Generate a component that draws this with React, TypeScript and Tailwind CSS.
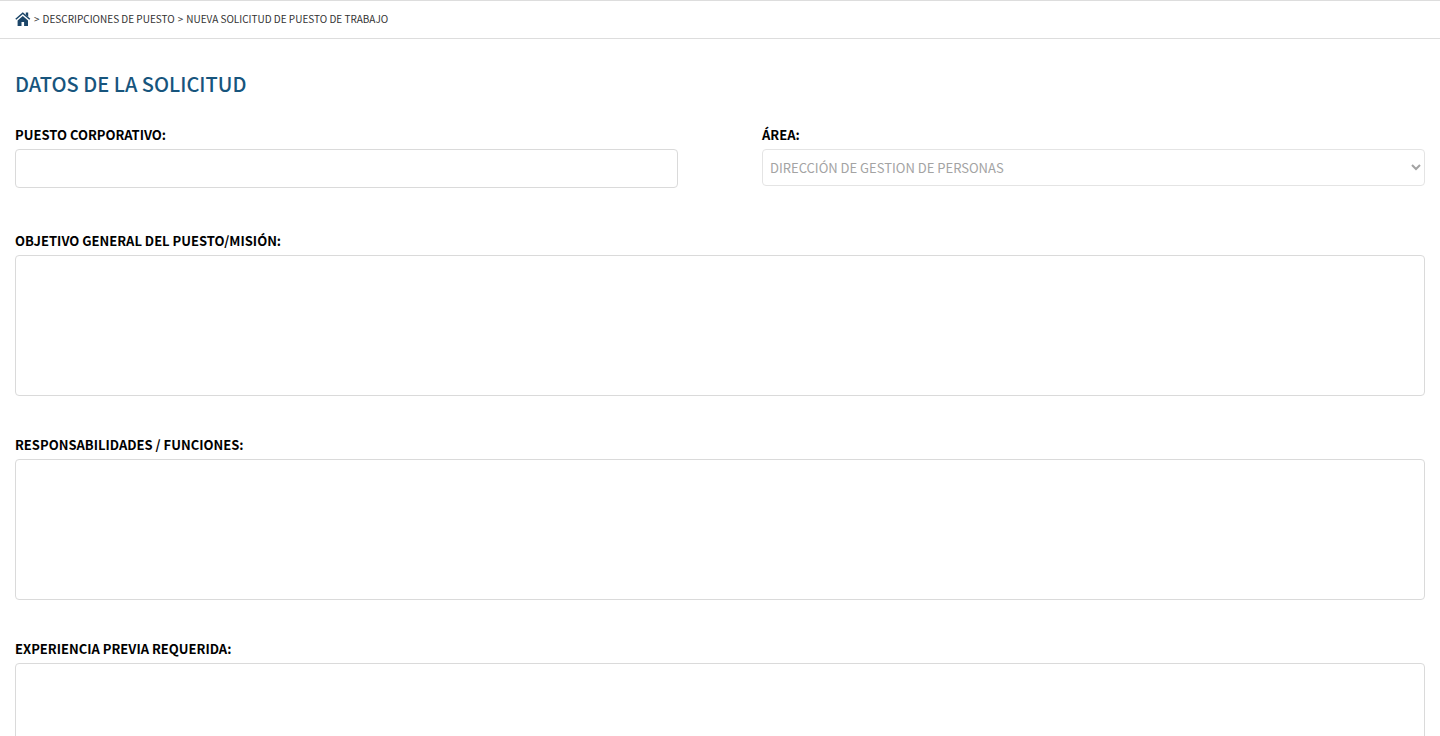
import React, { useState } from 'react';

interface TextAreaFieldProps {
  id: string;
  label: string;
  value: string;
  onChange: (value: string) => void;
}

const labelClass = 'block mb-1 text-[13px] leading-5 font-bold text-black uppercase';

const TextAreaField: React.FC<TextAreaFieldProps> = ({ id, label, value, onChange }) => (
  <div>
    <label htmlFor={id} className={labelClass}>{label}</label>
    <textarea
      id={id}
      value={value}
      onChange={(e) => onChange(e.target.value)}
      className="block w-full h-[141px] px-2 py-2 text-sm bg-white border border-[#dadada] rounded resize-none"
    />
  </div>
);

const HomeIcon: React.FC = () => (
  <svg className="w-4 h-4" viewBox="0 0 16 16" fill="none" aria-hidden="true">
    <path d="M0.8 8.2 L7.8 2.2 L14.8 8.2" stroke="#1b4568" strokeWidth="1.5" />
    <path d="M10.8 1.6 H13.2 V6 L10.8 3.9 Z" fill="#1b4568" />
    <path d="M7.8 5 L13 9.4 V15 H9.1 V11 H6.5 V15 H2.6 V9.4 Z" fill="#1b4568" />
  </svg>
);

const textAreas = [
  { id: 'objetivo', label: 'Objetivo general del puesto/misión:' },
  { id: 'responsabilidades', label: 'Responsabilidades / Funciones:' },
  { id: 'experiencia', label: 'Experiencia previa requerida:' },
];

const App: React.FC = () => {
  const [puesto, setPuesto] = useState('');
  const [values, setValues] = useState<Record<string, string>>({});

  const handleChange = (id: string, value: string) => {
    setValues((prev) => ({ ...prev, [id]: value }));
  };

  return (
    <div className="min-h-screen bg-white font-['Noto_Sans_CJK_SC','Noto_Sans',sans-serif]">
      <nav className="flex items-center gap-[3px] px-[15px] pt-[9px] pb-[11px] border-y border-[#dddddd] text-[10px] leading-[17px] text-[#333333] uppercase">
        <a href="#inicio" aria-label="Inicio"><HomeIcon /></a>
        <span>&gt;</span>
        <a href="#descripciones">Descripciones de puesto</a>
        <span>&gt;</span>
        <span>Nueva solicitud de puesto de trabajo</span>
      </nav>

      <main className="px-[15px] pt-[29px] pb-10">
        <h1 className="mb-[25px] text-xl leading-8 font-medium text-[#17557d] uppercase">
          Datos de la solicitud
        </h1>

        <form>
          <div className="grid grid-cols-2 items-start gap-x-[84px] mb-[43px]">
            <div>
              <label htmlFor="puesto" className={labelClass}>Puesto corporativo:</label>
              <input
                id="puesto"
                type="text"
                value={puesto}
                onChange={(e) => setPuesto(e.target.value)}
                className="block w-full h-[39px] px-2 text-sm bg-white border border-[#dadada] rounded"
              />
            </div>
            <div>
              <label htmlFor="area" className={labelClass}>Área:</label>
              <select
                id="area"
                disabled
                className="block w-full h-[37px] px-[3px] text-[13px] text-[#a3a3a3] bg-white border border-[#e4e4e4] rounded uppercase"
              >
                <option>Dirección de gestion de personas</option>
              </select>
            </div>
          </div>

          <div className="flex flex-col gap-[39px]">
            {textAreas.map((field) => (
              <TextAreaField
                key={field.id}
                id={field.id}
                label={field.label}
                value={values[field.id] || ''}
                onChange={(value) => handleChange(field.id, value)}
              />
            ))}
          </div>
        </form>
      </main>
    </div>
  );
};

export default App;
